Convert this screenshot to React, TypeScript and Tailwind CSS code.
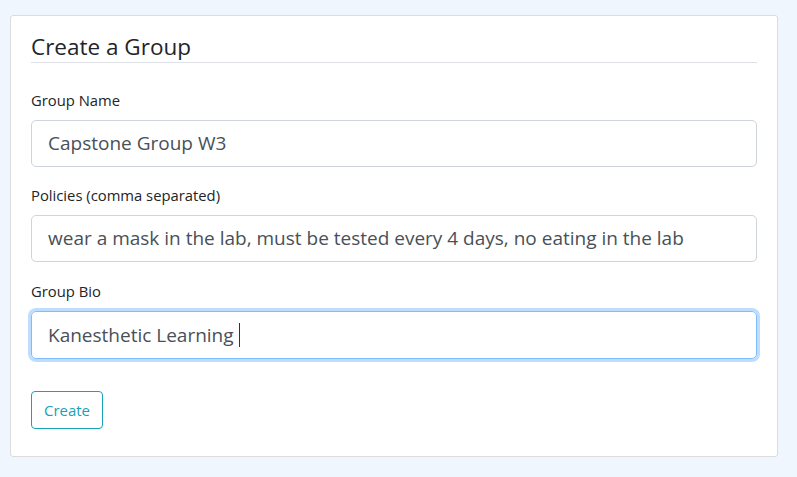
export default function App() {
  return (
    <div className="min-h-[477px] w-[797px] bg-[#eff6fe] pt-[15px] pl-[10px]" style={{ fontFamily: '"Open Sans", "Noto Sans", sans-serif' }}>
      <div className="w-[768px] h-[442px] rounded-[3px] border border-[#dcdcdc] bg-white px-[20px] pt-[17px]">
        <h4 className="text-[22.5px] leading-[28px] text-[#212529] border-b border-[#dee2e6] pb-[1px] font-normal">Create a Group</h4>
        <div className="mt-[25px]">
          <label className="block text-[14.8px] leading-[24px] mb-[8px] text-[#212529]">Group Name</label>
          <div className="h-[47px] rounded-[5px] border border-[#ced4da] px-[16px] flex items-center text-[19px] text-[#495057]">Capstone Group W3</div>
        </div>
        <div className="mt-[16px]">
          <label className="block text-[14.8px] leading-[24px] mb-[8px] text-[#212529]">Policies (comma separated)</label>
          <div className="h-[47px] rounded-[5px] border border-[#ced4da] px-[16px] flex items-center text-[19px] text-[#495057]">wear a mask in the lab, must be tested every 4 days, no eating in the lab</div>
        </div>
        <div className="mt-[17px]">
          <label className="block text-[14.8px] leading-[24px] mb-[8px] text-[#212529]">Group Bio</label>
          <div className="h-[48px] rounded-[5px] border border-[#80bdff] shadow-[0_0_0_3px_rgba(0,123,255,0.25)] px-[16px] flex items-center text-[19px] text-[#495057]">
            Kanesthetic Learning<span className="inline-block w-px h-[24px] bg-[#333] ml-[5px]"></span>
          </div>
        </div>
        <button className="mt-[32px] h-[38px] w-[72px] rounded-[4px] border border-[#17a2b8] text-[#17a2b8] text-[15px] bg-white">Create</button>
      </div>
    </div>
  );
}
